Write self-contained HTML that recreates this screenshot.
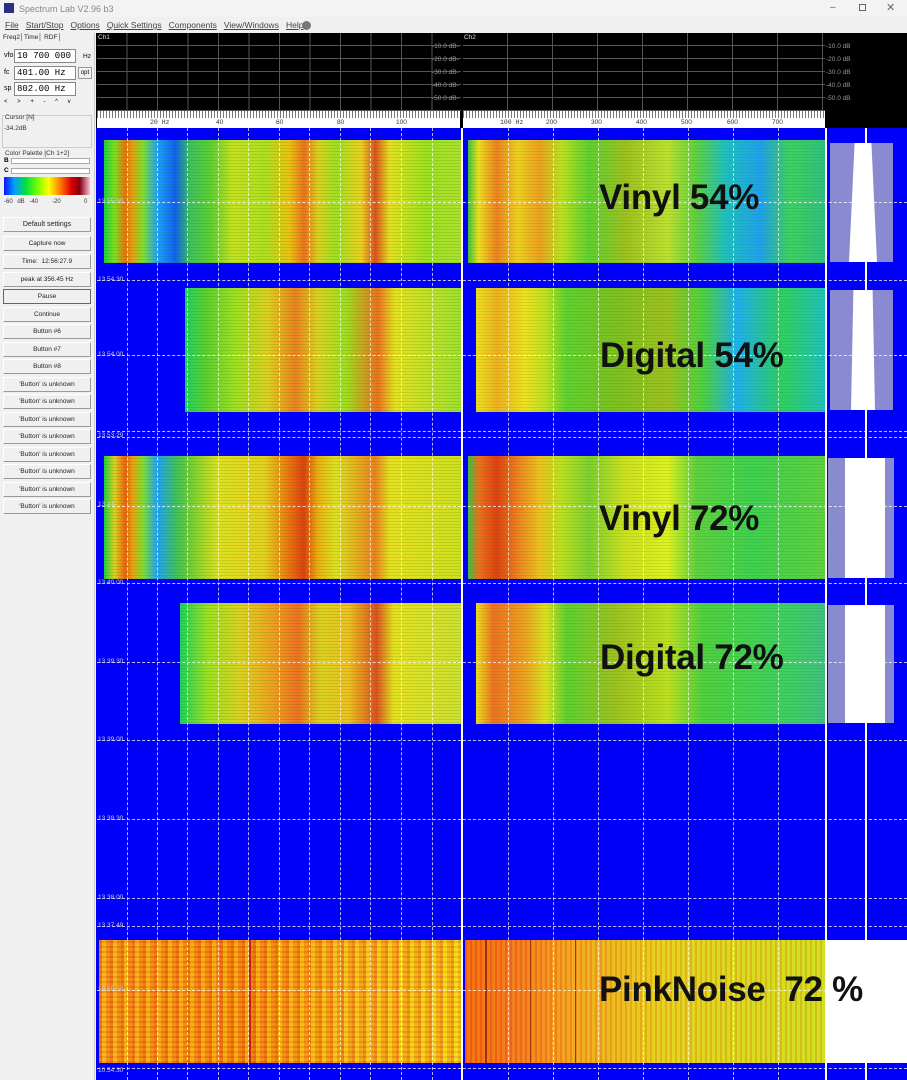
<!DOCTYPE html>
<html><head><meta charset="utf-8"><style>
*{margin:0;padding:0;box-sizing:border-box}
body{width:907px;height:1080px;overflow:hidden;background:#f0f0f0;font-family:"Liberation Sans",sans-serif;position:relative}
.a{position:absolute}
.title{left:0;top:0;width:907px;height:17px;background:#f3f3f3;font-size:9px;color:#888}
.menu{left:0;top:17px;width:907px;height:16px;background:#f0f0f0;font-size:8.5px;color:#444}
.menu span{margin-right:7px;text-decoration:underline;text-decoration-thickness:0}
.btn{left:3px;width:88px;height:15px;background:#f0f0f0;border:1px solid #fff;border-right-color:#999;border-bottom-color:#999;font-size:6.5px;text-align:center;line-height:13px;color:#222}
.blk{position:absolute}
.lbl{position:absolute;font-weight:bold;font-size:35px;color:#111;letter-spacing:-0.3px;white-space:nowrap}
.tl{position:absolute;left:98px;font-size:6.5px;color:#ccd}
.hl{position:absolute;left:97px;width:810px;height:0;border-top:1px dashed rgba(255,255,255,.75)}
.vl{position:absolute;top:128px;height:952px;width:0;border-left:1px dashed rgba(255,255,255,.7)}
.inp{position:absolute;background:#fff;border:1px solid #888;font-family:"Liberation Mono",monospace;font-size:9px;line-height:12px;padding-left:2px;white-space:nowrap;overflow:hidden}
</style></head><body>
<div class="a title"><div class="a" style="left:4px;top:3px;width:10px;height:10px;background:#2b2f80"></div><div class="a" style="left:19px;top:4px">Spectrum Lab V2.96 b3</div>
<div class="a" style="left:830px;top:2px;font-size:10px;color:#666">–</div><div class="a" style="left:859px;top:4px;width:7px;height:7px;border:1px solid #666"></div><div class="a" style="left:886px;top:1px;font-size:11px;color:#666">✕</div></div>
<div class="a menu"><div class="a" style="left:5px;top:3px;white-space:nowrap"><span>File</span><span>Start/Stop</span><span>Options</span><span>Quick Settings</span><span>Components</span><span>View/Windows</span><span>Help</span></div><div class="a" style="left:302px;top:4px;width:9px;height:9px;border-radius:50%;background:#777"></div></div>

<div class="a" style="left:0;top:33px;width:95px;height:1047px;background:#f0f0f0;border-right:1px solid #ccc"></div>
<div class="a" style="left:3px;top:34px;font-size:6.5px;color:#222">Freq2│Time│ RDF│</div>
<div class="a" style="left:4px;top:52px;font-size:7px">vfo</div><div class="inp" style="left:14px;top:49px;width:62px;height:14px">10 700 000</div><div class="a" style="left:83px;top:53px;font-size:6.5px">Hz</div>
<div class="a" style="left:4px;top:69px;font-size:7px">fc</div><div class="inp" style="left:14px;top:66px;width:62px;height:14px">401.00 Hz</div><div class="a" style="left:78px;top:67px;width:14px;height:12px;border:1px solid #999;font-size:6px;line-height:10px;text-align:center">opt</div>
<div class="a" style="left:4px;top:85px;font-size:7px">sp</div><div class="inp" style="left:14px;top:82px;width:62px;height:14px">802.00 Hz</div>
<div class="a" style="left:4px;top:99px;font-size:6px;word-spacing:6px;letter-spacing:1px">&lt; &gt; + - ^ v</div>
<div class="a" style="left:2px;top:115px;width:90px;height:33px;border:1px solid #ccc"></div>
<div class="a" style="left:5px;top:114px;font-size:6.5px;color:#333">Cursor [N]</div><div class="a" style="left:4px;top:125px;font-size:6.5px;color:#333">-34.2dB</div>
<div class="a" style="left:5px;top:150px;font-size:6.5px;color:#333">Color Palette [Ch 1+2]</div>
<div class="a" style="left:4px;top:157px;font-size:6.5px;font-weight:bold">B</div><div class="a" style="left:11px;top:158px;width:79px;height:6px;background:#fff;border:1px solid #aaa"></div>
<div class="a" style="left:4px;top:167px;font-size:6.5px;font-weight:bold">C</div><div class="a" style="left:11px;top:168px;width:79px;height:6px;background:#fff;border:1px solid #aaa"></div>
<div class="a" style="left:4px;top:177px;width:86px;height:18px;background:linear-gradient(90deg,#1010ff,#00a0ff 12%,#00e040 25%,#80ff00 40%,#ffff00 52%,#ff8000 65%,#e00000 78%,#800010 88%,#ffc0d0)"></div>
<div class="a" style="left:4px;top:199px;font-size:6px;color:#333;word-spacing:3px">-60 dB -40 &nbsp; -20 &nbsp; &nbsp; 0</div>

<div class="a btn" style="top:217px;font-size:7px">Default settings</div>
<div class="a btn" style="top:236px">Capture now</div>
<div class="a btn" style="top:254px">Time: &nbsp;12:56:27.9</div>
<div class="a btn" style="top:272px">peak at 356.45 Hz</div>
<div class="a btn" style="top:289px;border:1px solid #666">Pause</div>
<div class="a btn" style="top:307px">Continue</div>
<div class="a btn" style="top:324px">Button #6</div>
<div class="a btn" style="top:342px">Button #7</div>
<div class="a btn" style="top:359px">Button #8</div>
<div class="a btn" style="top:377px">'Button' is unknown</div>
<div class="a btn" style="top:394px">'Button' is unknown</div>
<div class="a btn" style="top:412px">'Button' is unknown</div>
<div class="a btn" style="top:429px">'Button' is unknown</div>
<div class="a btn" style="top:447px">'Button' is unknown</div>
<div class="a btn" style="top:464px">'Button' is unknown</div>
<div class="a btn" style="top:482px">'Button' is unknown</div>
<div class="a btn" style="top:499px">'Button' is unknown</div>

<div class="a" style="left:96px;top:33px;width:811px;height:95px;background:#000"></div>
<div class="a" style="left:97px;top:33px;width:364px;height:78px;background:repeating-linear-gradient(90deg,transparent 0 29.5px,#555 29.5px 30.5px),repeating-linear-gradient(180deg,transparent 0 12px,#555 12px 13px)"></div>
<div class="a" style="left:463px;top:33px;width:362px;height:78px;background:repeating-linear-gradient(90deg,transparent 0 44px,#555 44px 45px),repeating-linear-gradient(180deg,transparent 0 12px,#555 12px 13px)"></div>
<div class="a" style="left:98px;top:34px;font-size:6.5px;color:#ddd">Ch1</div>
<div class="a" style="left:464px;top:34px;font-size:6.5px;color:#ddd">Ch2</div>
<div class="a" style="left:432px;top:40px;font-size:6.5px;color:#999;line-height:13px">-10.0 dB-<br>-20.0 dB-<br>-30.0 dB-<br>-40.0 dB-<br>-50.0 dB-</div>
<div class="a" style="left:826px;top:40px;font-size:6.5px;color:#999;line-height:13px">-10.0 dB<br>-20.0 dB<br>-30.0 dB<br>-40.0 dB<br>-50.0 dB</div>
<div class="a" style="left:97px;top:111px;width:728px;height:17px;background:#fff"></div>
<div class="a" style="left:97px;top:111px;width:728px;height:7px;background:repeating-linear-gradient(90deg,#777 0 1px,transparent 1px 3px)"></div>
<div class="a" style="left:460px;top:111px;width:3px;height:17px;background:#000"></div>
<div class="a" style="left:150px;top:119px;font-size:6.5px;color:#333;font-family:'Liberation Mono',monospace">20 Hz</div>
<div class="a" style="left:216px;top:119px;font-size:6.5px;color:#333">40</div>
<div class="a" style="left:276px;top:119px;font-size:6.5px;color:#333">60</div>
<div class="a" style="left:337px;top:119px;font-size:6.5px;color:#333">80</div>
<div class="a" style="left:396px;top:119px;font-size:6.5px;color:#333">100</div>
<div class="a" style="left:500px;top:119px;font-size:6.5px;color:#333;font-family:'Liberation Mono',monospace">100 Hz</div>
<div class="a" style="left:546px;top:119px;font-size:6.5px;color:#333">200</div>
<div class="a" style="left:591px;top:119px;font-size:6.5px;color:#333">300</div>
<div class="a" style="left:636px;top:119px;font-size:6.5px;color:#333">400</div>
<div class="a" style="left:681px;top:119px;font-size:6.5px;color:#333">500</div>
<div class="a" style="left:727px;top:119px;font-size:6.5px;color:#333">600</div>
<div class="a" style="left:772px;top:119px;font-size:6.5px;color:#333">700</div>

<div class="a" style="left:96px;top:128px;width:811px;height:952px;background:#0000f8"></div>
<div class="a" style="left:461px;top:128px;width:2px;height:952px;background:#fff"></div>
<div class="a" style="left:825px;top:128px;width:2px;height:952px;background:#fff"></div>
<div class="a" style="left:865px;top:128px;width:2px;height:952px;background:#fff"></div>

<div class="blk" style="left:104px;top:140px;width:357px;height:123px;background:repeating-linear-gradient(180deg,rgba(0,0,0,0) 0 2px,rgba(0,120,0,.15) 2px 3px),linear-gradient(90deg,#20d040 0,#80e020 3%,#f07010 6%,#e8a010 8%,#80e030 11%,#20a0ff 15%,#1060f0 20%,#40c060 24%,#60d030 30%,#c8e020 36%,#b0e020 45%,#f0c010 52%,#f07020 56%,#e0d020 60%,#a0e020 65%,#f0d020 72%,#e05020 76%,#e8e020 80%,#a0e020 90%,#b0e030 100%)"></div>
<div class="blk" style="left:185px;top:288px;width:276px;height:124px;background:repeating-linear-gradient(180deg,rgba(0,0,0,0) 0 2px,rgba(0,120,0,.15) 2px 3px),linear-gradient(90deg,#20d060 0,#60d030 8%,#a0e020 18%,#e0d020 30%,#f08020 40%,#e0d020 48%,#a0e020 58%,#f07020 70%,#e8e020 76%,#a0e030 100%)"></div>
<div class="blk" style="left:104px;top:456px;width:357px;height:123px;background:repeating-linear-gradient(180deg,rgba(0,0,0,0) 0 2px,rgba(0,120,0,.15) 2px 3px),linear-gradient(90deg,#20d040 0,#e0d020 3%,#f06010 6%,#f0a010 8%,#80e030 11%,#20a0ff 15%,#40c060 20%,#80d030 25%,#e0e020 32%,#e8d020 45%,#f07010 52%,#e04010 56%,#f0b010 60%,#e0e020 65%,#f08020 76%,#e8e020 80%,#d0e020 100%)"></div>
<div class="blk" style="left:180px;top:603px;width:281px;height:121px;background:repeating-linear-gradient(180deg,rgba(0,0,0,0) 0 2px,rgba(0,120,0,.15) 2px 3px),linear-gradient(90deg,#20d060 0,#a0e020 10%,#e0d020 22%,#f0a020 33%,#f07020 42%,#e0d020 50%,#f0c020 60%,#e05020 70%,#e8e020 76%,#d0e030 100%)"></div>
<div class="blk" style="left:99px;top:940px;width:362px;height:123px;background:repeating-linear-gradient(90deg,rgba(230,60,10,.35) 0 3px,rgba(250,240,20,.3) 3px 7px,rgba(240,120,10,.3) 7px 11px),repeating-linear-gradient(0deg,rgba(200,40,0,.2) 0 2px,rgba(255,255,0,.15) 2px 5px),linear-gradient(90deg,#f09020,#f08010 40%,#f0b020 70%,#f0d020)"></div>
<div class="a" style="left:249px;top:940px;width:2px;height:123px;background:#c02020"></div>

<div class="blk" style="left:468px;top:140px;width:357px;height:123px;background:repeating-linear-gradient(180deg,rgba(0,0,0,0) 0 2px,rgba(0,120,0,.12) 2px 3px),linear-gradient(90deg,#40c040 0,#f0e020 3%,#f08020 8%,#f0d020 14%,#f0a020 20%,#c0e020 26%,#60d030 34%,#a0c020 44%,#c0e030 56%,#60d040 64%,#20c0c0 72%,#20a0f0 82%,#40d060 90%,#30c080 100%)"></div>
<div class="blk" style="left:476px;top:288px;width:349px;height:124px;background:repeating-linear-gradient(180deg,rgba(0,0,0,0) 0 2px,rgba(0,120,0,.12) 2px 3px),linear-gradient(90deg,#f0e020 0,#f0b020 6%,#f0e020 14%,#c0e020 20%,#60d030 26%,#80c020 40%,#a0c020 55%,#50d040 65%,#20b0f0 75%,#30d060 88%,#20c0c0 100%)"></div>
<div class="blk" style="left:468px;top:456px;width:357px;height:123px;background:repeating-linear-gradient(180deg,rgba(0,0,0,0) 0 2px,rgba(0,120,0,.12) 2px 3px),linear-gradient(90deg,#40c040 0,#f07020 3%,#e04010 8%,#f08020 14%,#f0c020 20%,#c0e020 26%,#80d030 34%,#d0e020 44%,#e0f020 56%,#60d040 64%,#40d050 80%,#60d040 100%)"></div>
<div class="blk" style="left:476px;top:603px;width:349px;height:121px;background:repeating-linear-gradient(180deg,rgba(0,0,0,0) 0 2px,rgba(0,120,0,.12) 2px 3px),linear-gradient(90deg,#f0e020 0,#f07020 5%,#f0a020 14%,#e0e020 20%,#60d030 26%,#a0c020 40%,#c0e020 55%,#50d040 65%,#40d060 88%,#40c080 100%)"></div>
<div class="blk" style="left:465px;top:940px;width:360px;height:123px;background:repeating-linear-gradient(90deg,rgba(230,60,10,.2) 0 2px,rgba(250,240,20,.15) 2px 5px),linear-gradient(90deg,#f06010,#f07020 15%,#f0a020 30%,#e0d020 55%,#c8e020 100%)"></div>
<div class="a" style="left:485px;top:940px;width:2px;height:123px;background:#a03010"></div>
<div class="a" style="left:530px;top:940px;width:1px;height:123px;background:#b03010"></div>
<div class="a" style="left:575px;top:940px;width:1px;height:123px;background:#b03010"></div>

<div class="a" style="left:830px;top:143px;width:63px;height:119px;background:#8a8ad0"></div>
<div class="a" style="left:849px;top:143px;width:28px;height:119px;background:#fff;clip-path:polygon(20% 0,80% 0,100% 100%,0 100%)"></div>
<div class="a" style="left:830px;top:290px;width:63px;height:120px;background:#8a8ad0"></div>
<div class="a" style="left:851px;top:290px;width:24px;height:120px;background:#fff;clip-path:polygon(10% 0,90% 0,100% 100%,0 100%)"></div>
<div class="a" style="left:828px;top:458px;width:66px;height:120px;background:#8a8ad0"></div>
<div class="a" style="left:845px;top:458px;width:40px;height:120px;background:#fff"></div>
<div class="a" style="left:828px;top:605px;width:66px;height:118px;background:#8a8ad0"></div>
<div class="a" style="left:845px;top:605px;width:40px;height:118px;background:#fff"></div>
<div class="a" style="left:827px;top:940px;width:80px;height:123px;background:#fff"></div>

<div class="vl" style="left:127px"></div><div class="vl" style="left:157px"></div><div class="vl" style="left:187px"></div><div class="vl" style="left:218px"></div><div class="vl" style="left:248px"></div><div class="vl" style="left:279px"></div><div class="vl" style="left:309px"></div><div class="vl" style="left:340px"></div><div class="vl" style="left:370px"></div><div class="vl" style="left:401px"></div><div class="vl" style="left:432px"></div>
<div class="vl" style="left:508px"></div><div class="vl" style="left:553px"></div><div class="vl" style="left:598px"></div><div class="vl" style="left:643px"></div><div class="vl" style="left:688px"></div><div class="vl" style="left:733px"></div><div class="vl" style="left:778px"></div>
<div class="hl" style="top:202px"></div><div class="hl" style="top:280px"></div><div class="hl" style="top:355px"></div><div class="hl" style="top:431px"></div><div class="hl" style="top:437px"></div><div class="hl" style="top:506px"></div><div class="hl" style="top:583px"></div><div class="hl" style="top:662px"></div><div class="hl" style="top:740px"></div><div class="hl" style="top:819px"></div><div class="hl" style="top:898px"></div><div class="hl" style="top:926px"></div><div class="hl" style="top:990px"></div><div class="hl" style="top:1068px"></div>
<div class="tl" style="top:198px">13.55.00</div><div class="tl" style="top:276px">13.54.30</div><div class="tl" style="top:351px">13.54.00</div><div class="tl" style="top:432px">13.53.29</div><div class="tl" style="top:501px">13.41</div><div class="tl" style="top:579px">13.40.00</div><div class="tl" style="top:658px">13.39.30</div><div class="tl" style="top:736px">13.39.00</div><div class="tl" style="top:815px">13.38.30</div><div class="tl" style="top:894px">13.38.00</div><div class="tl" style="top:922px">13.37.49</div><div class="tl" style="top:986px">10.55.00</div><div class="tl" style="top:1067px">10.54.30</div>

<div class="lbl" style="left:599px;top:178px">Vinyl 54%</div>
<div class="lbl" style="left:600px;top:336px">Digital 54%</div>
<div class="lbl" style="left:599px;top:499px">Vinyl 72%</div>
<div class="lbl" style="left:600px;top:638px">Digital 72%</div>
<div class="lbl" style="left:599px;top:970px">PinkNoise&nbsp; 72 %</div>
</body></html>
